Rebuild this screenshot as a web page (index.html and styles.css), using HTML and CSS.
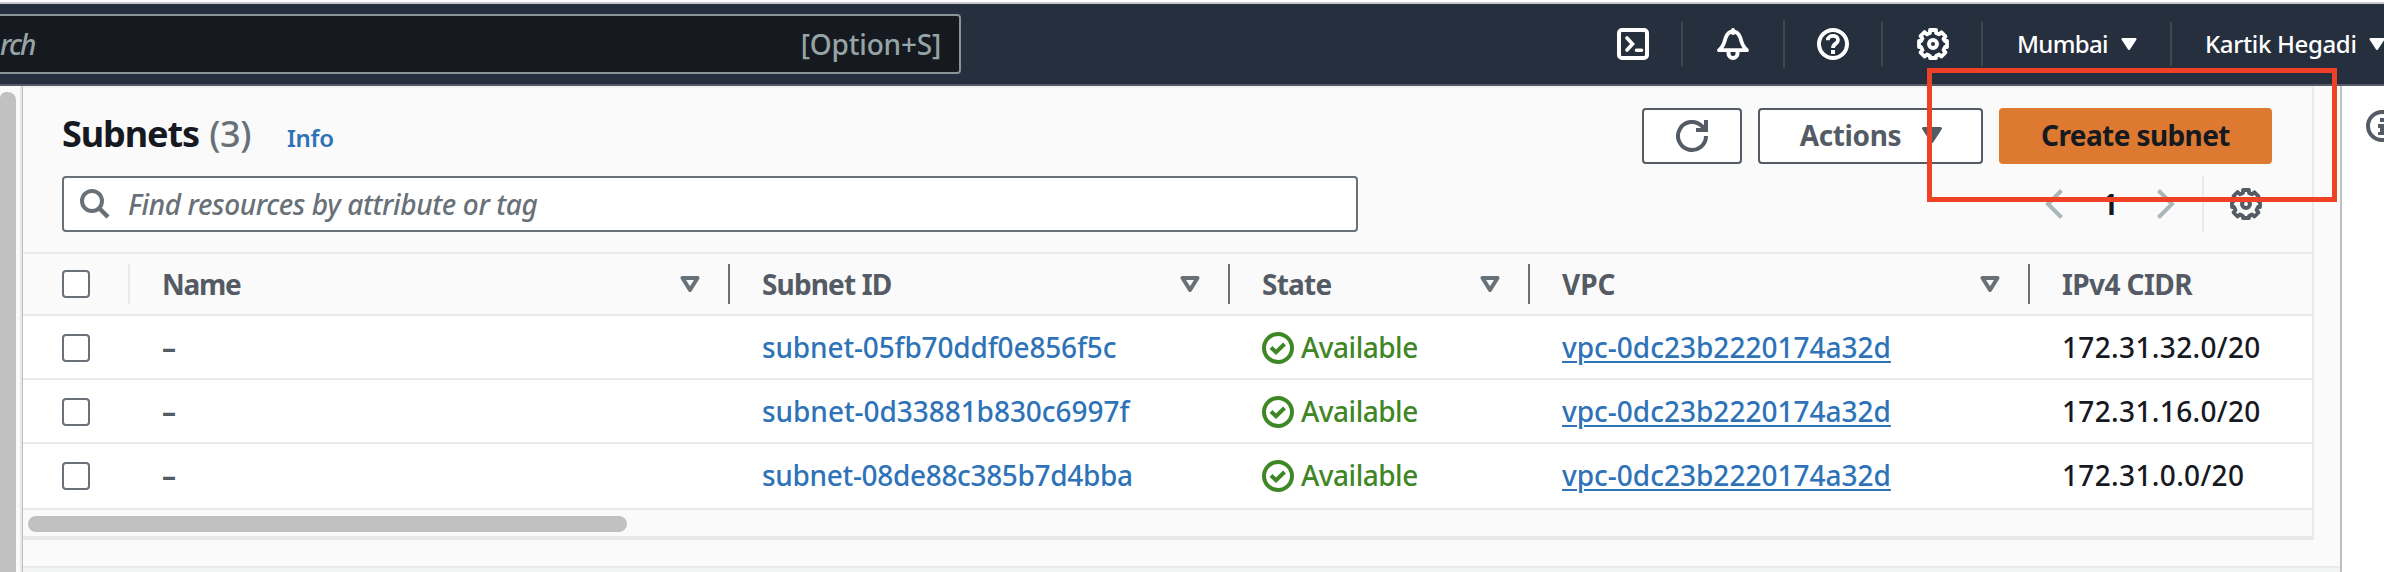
FILE: index.html
```html
<!DOCTYPE html>
<html lang="en">
<head>
<meta charset="utf-8">
<title>Subnets</title>
<link rel="stylesheet" href="styles.css">
</head>
<body>
<svg class="defs" aria-hidden="true">
  <symbol id="gear" viewBox="0 0 32 32">
    <path d="M13 2h6v3l3 1.300 2.500-2 4 4-2 2.700L28 13h2v6h-2l-1.500 3 2 2.500-4 4-2.500-2L19 28v2h-6v-2l-3-1.500-2.500 2-4-4 2-2.500L4 19H2v-6h2l1.500-2.500-2-2.500 4-4L10 6.300 13 5z" fill="none" stroke="currentColor" stroke-width="3.800" stroke-linejoin="round"/>
    <circle cx="16" cy="16" r="4" fill="none" stroke="currentColor" stroke-width="4"/>
  </symbol>
  <symbol id="check" viewBox="0 0 32 32">
    <circle cx="16" cy="16" r="14" fill="none" stroke="currentColor" stroke-width="4"/>
    <path d="M9 15.500l5 4.800 8.500-8.300" fill="none" stroke="currentColor" stroke-width="4"/>
  </symbol>
  <symbol id="sort" viewBox="0 0 20 16">
    <path d="M2.500 2h15L10 14z" fill="none" stroke="currentColor" stroke-width="4" stroke-linejoin="round"/>
  </symbol>
  <symbol id="caret" viewBox="0 0 20 16">
    <path d="M1.500 1.500h17L10 14.500z" fill="currentColor" stroke="currentColor" stroke-width="3" stroke-linejoin="round"/>
  </symbol>
</svg>

<header class="topbar">
  <div class="global-search"><em>rch</em><span>[Option+S]</span></div>
  <nav class="topnav">
    <a class="nav-icon"><svg viewBox="0 0 32 32"><rect x="2" y="2" width="28" height="28" rx="3" fill="none" stroke="currentColor" stroke-width="4"/><path d="M10 10l5.500 6-5.500 6M19.500 22.200h5" fill="none" stroke="currentColor" stroke-width="3.600" stroke-linecap="round"/></svg></a>
    <a class="nav-icon tall"><svg viewBox="0 0 32 32"><path d="M16 2v3" stroke="currentColor" stroke-width="4" stroke-linecap="round"/><path d="M2 22.200h28c-5-4-5-7-6.500-12C22 6 19.500 3.500 16 3.500S10 6 8.500 10.200C7 15.200 7 18.200 2 22.200z" fill="none" stroke="currentColor" stroke-width="3.800" stroke-linejoin="round"/><path d="M11.500 24v1.500a4.500 4.500 0 0 0 9 0V24" fill="none" stroke="currentColor" stroke-width="4"/></svg></a>
    <a class="nav-icon"><svg viewBox="0 0 32 32"><circle cx="16" cy="16" r="14" fill="none" stroke="currentColor" stroke-width="4"/><path d="M10.800 12.200c0-5.900 10.200-5.700 10.200-.2 0 4-5 3.300-5 8" fill="none" stroke="currentColor" stroke-width="3.800"/><path d="M14 22h4v4h-4z" fill="currentColor"/></svg></a>
    <a class="nav-icon"><svg><use href="#gear"/></svg></a>
    <a class="nav-menu region">Mumbai<svg><use href="#caret"/></svg></a>
    <a class="nav-menu account">Kartik Hegadi<svg><use href="#caret"/></svg></a>
  </nav>
</header>

<div class="workspace">
  <div class="side-scroll"><div class="side-thumb"></div></div>
  <main class="panel">
    <section class="card">
      <div class="title-row">
        <h1>Subnets <span>(3)</span></h1>
        <a class="info">Info</a>
        <div class="actions">
          <button class="btn refresh"><svg viewBox="0 0 32 32"><path d="M30 16A14 14 0 1 1 26 6.200l3.500 3.600" fill="none" stroke="currentColor" stroke-width="4"/><path d="M30 0v10H20" fill="none" stroke="currentColor" stroke-width="4"/></svg></button>
          <button class="btn menu">Actions<svg><use href="#caret"/></svg></button>
          <button class="btn primary">Create subnet</button>
        </div>
      </div>
      <div class="filter-row">
        <div class="filter"><svg viewBox="0 0 30 30"><circle cx="12" cy="12" r="10" fill="none" stroke="currentColor" stroke-width="4"/><path d="M19 19l9 9" stroke="currentColor" stroke-width="4.500"/></svg><em>Find resources by attribute or tag</em></div>
        <div class="pager">
          <svg class="chev" viewBox="0 0 18 30"><path d="M16.500 1.500L3 15l13.500 13.500" fill="none" stroke="currentColor" stroke-width="4"/></svg>
          <b>1</b>
          <svg class="chev" viewBox="0 0 18 30"><path d="M1.500 1.500L15 15 1.500 28.500" fill="none" stroke="currentColor" stroke-width="4"/></svg>
          <span class="gear"><svg><use href="#gear"/></svg></span>
        </div>
      </div>
      <div class="row head">
        <div class="cell pick"><i class="box"></i></div>
        <div class="cell name">Name<svg><use href="#sort"/></svg></div>
        <div class="cell sid">Subnet ID<svg><use href="#sort"/></svg></div>
        <div class="cell">State<svg><use href="#sort"/></svg></div>
        <div class="cell vpc">VPC<svg><use href="#sort"/></svg></div>
        <div class="cell cidr">IPv4 CIDR</div>
      </div>
      <div class="row">
        <div class="cell"><i class="box"></i></div><div class="cell dash">–</div>
        <div class="cell"><a class="id-a">subnet-05fb70ddf0e856f5c</a></div>
        <div class="cell state"><svg><use href="#check"/></svg>Available</div>
        <div class="cell"><a class="link">vpc-0dc23b2220174a32d</a></div>
        <div class="cell ip">172.31.32.0/20</div>
      </div>
      <div class="row">
        <div class="cell"><i class="box"></i></div><div class="cell dash">–</div>
        <div class="cell"><a class="id-b">subnet-0d33881b830c6997f</a></div>
        <div class="cell state"><svg><use href="#check"/></svg>Available</div>
        <div class="cell"><a class="link">vpc-0dc23b2220174a32d</a></div>
        <div class="cell ip">172.31.16.0/20</div>
      </div>
      <div class="row last">
        <div class="cell"><i class="box"></i></div><div class="cell dash">–</div>
        <div class="cell"><a class="id-c">subnet-08de88c385b7d4bba</a></div>
        <div class="cell state"><svg><use href="#check"/></svg>Available</div>
        <div class="cell"><a class="link">vpc-0dc23b2220174a32d</a></div>
        <div class="cell ip">172.31.0.0/20</div>
      </div>
      <div class="h-scroll"><div class="h-thumb"></div></div>
    </section>
    <div class="split"></div>
  </main>
  <aside class="help"><svg viewBox="0 0 32 32"><circle cx="16" cy="16" r="14" fill="none" stroke="currentColor" stroke-width="4"/><path d="M14 8h4v4h-4zM12 14h6v8h2v3h-8v-3h2v-4h-2z" fill="currentColor"/></svg></aside>
</div>
<div class="highlight"></div>
</body>
</html>
```

FILE: styles.css
```css
* { box-sizing: border-box; }
body {
  margin: 0;
  width: 2384px;
  height: 572px;
  overflow: hidden;
  display: flex;
  flex-direction: column;
  background: #fafafa;
  color: #16191f;
  font: 500 28px/36px "Noto Sans", sans-serif;
  white-space: nowrap;
}
svg { display: block; flex: none; }
.defs { position: absolute; width: 0; height: 0; }

.topbar {
  flex: none;
  height: 86px;
  display: flex;
  justify-content: space-between;
  align-items: center;
  background: #252f3e;
  border-top: 2px solid #fff;
  border-bottom: 2px solid #545b64;
  box-shadow: inset 0 2px #c8c8c8;
}
.global-search {
  width: 961px;
  height: 60px;
  margin-top: 2px;
  padding: 0 18px 0 0;
  display: flex;
  justify-content: space-between;
  align-items: center;
  background: #16191f;
  border: solid #879596;
  border-width: 2px 2px 2px 0;
  border-radius: 0 4px 4px 0;
  color: #95a5a6;
}
.global-search em { letter-spacing: -1.8px; }
.global-search span { letter-spacing: -0.2px; }
.topnav { display: flex; align-items: center; color: #fff; margin-top: 2px; }
.nav-icon {
  width: 100px;
  height: 44px;
  padding-left: 2px;
  display: flex;
  align-items: center;
  justify-content: center;
  border-right: 2px solid #414750;
}
.nav-icon.tall { height: 48px; width: 102px; padding: 0; }
.nav-icon:nth-child(3) { width: 98px; padding-left: 0; }
.nav-icon svg { width: 32px; height: 32px; overflow: visible; }
.nav-menu { height: 44px; display: flex; align-items: center; font-size: 24px; font-weight: 500; }
.nav-menu svg { width: 16px; height: 12px; }
.region { width: 189px; padding-left: 34px; letter-spacing: -0.7px; border-right: 2px solid #414750; gap: 13px; }
.account { width: 212px; padding-left: 33px; letter-spacing: -0.35px; gap: 12px; }

.workspace { flex: 1; display: flex; min-height: 0; }
.side-scroll { width: 22px; flex: none; padding-top: 6px; border-right: 2px solid #e8e8e8; }
.side-thumb { width: 16px; height: 500px; background: #c1c1c1; border-radius: 6px 8px 0 0; }
.panel {
  width: 2320px;
  flex: none;
  display: flex;
  flex-direction: column;
  border-left: 1px solid #bcc0c3;
  border-right: 2px solid #bcc0c3;
  background: #fafafa;
}
.card {
  width: 2291px;
  height: 454px;
  display: flex;
  flex-direction: column;
  border-top: 2px solid #f2f2f2;
  border-right: 2px solid #eaeaea;
  border-bottom: 4px solid #e8e8e8;
}
.title-row { height: 88px; display: flex; align-items: flex-start; padding: 20px 40px 0 39px; }
h1 { margin: 0; padding-top: 2px; font-size: 36px; line-height: 48px; font-weight: 700; letter-spacing: -1.1px; }
h1 span { font-weight: 500; color: #687078; letter-spacing: -0.4px; margin-left: 2px; }
.info { margin-left: 36px; padding-top: 12px; color: #2e73b8; font-size: 24px; font-weight: 650; letter-spacing: -0.3px; }
.actions { margin-left: auto; display: flex; gap: 16px; }
.btn {
  height: 56px;
  padding: 0 0 2px;
  display: flex;
  align-items: center;
  justify-content: center;
  background: #fff;
  border: 2px solid #545b64;
  border-radius: 4px;
  color: #545b64;
  font: 700 28px/36px "Noto Sans", sans-serif;
  letter-spacing: -0.4px;
}
.refresh { width: 100px; padding: 0; }
.refresh svg { width: 32px; height: 32px; overflow: visible; }
.menu { width: 225px; gap: 21px; padding-left: 1px; }
.menu svg { width: 20px; height: 16px; }
.primary { width: 273px; background: #dd7931; border-color: #dd7931; color: #16191f; letter-spacing: -0.6px; }

.filter-row { height: 78px; padding: 0 40px 0 39px; display: flex; align-items: flex-start; justify-content: space-between; border-bottom: 2px solid #eaeaea; }
.filter {
  width: 1296px;
  height: 56px;
  padding-left: 16px;
  display: flex;
  align-items: center;
  gap: 18px;
  background: #fff;
  border: 2px solid #687078;
  border-radius: 4px;
  color: #687078;
}
.filter em { letter-spacing: -0.37px; }
.filter svg { width: 30px; height: 30px; }
.pager { height: 56px; display: flex; align-items: center; }
.pager b { width: 94px; text-align: center; font-weight: 700; }
.chev { width: 18px; height: 30px; color: #aab7b8; }
.gear { height: 56px; margin-left: 27px; padding: 0 10px 0 26px; display: flex; align-items: center; border-left: 2px solid #eaeaea; color: #545b64; }
.gear svg { width: 32px; height: 32px; overflow: visible; }

.row {
  display: grid;
  grid-template-columns: 107px 600px 500px 300px 500px 282px;
  height: 64px;
  background: #fff;
  border-bottom: 2px solid #eaeaea;
}
.row.last { height: 66px; }
.row.last .cell { height: 62px; }
.cell { display: flex; align-items: center; padding-left: 32px; }
.cell:first-child { padding-left: 39px; }
.box { width: 28px; height: 28px; margin-top: 2px; border: 2px solid #687078; border-radius: 4px; background: #fff; }
.head { height: 62px; padding: 10px 0; background: #fafafa; color: #545b64; font-weight: 700; letter-spacing: -0.75px; }
.head .box { margin-top: 0; }
.head .cell { height: 40px; justify-content: space-between; padding-right: 28px; border-right: 2px solid #687078; line-height: 38px; }
.head .cell:last-child { border: 0; }
.head .pick { border-color: #eaeaea; }
.head .name { letter-spacing: -1.3px; }
.head .sid { letter-spacing: -0.85px; }
.head .vpc { letter-spacing: 0; }
.head .cidr { letter-spacing: -0.6px; }
.head svg { width: 20px; height: 16px; color: #687078; }
.dash { color: #545b64; font-weight: 700; }
.id-a, .id-b, .id-c { color: #2e73b8; }
.id-a { letter-spacing: -0.15px; }
.id-b { letter-spacing: -0.05px; }
.id-c { letter-spacing: -0.33px; }
.state { color: #3f8624; gap: 7px; letter-spacing: -0.5px; }
.state svg { width: 32px; height: 32px; margin-top: 2px; overflow: visible; }
.link { color: #2e73b8; text-decoration: underline; text-decoration-thickness: 2px; text-underline-offset: 3px; }
.ip { letter-spacing: 0.35px; }
.h-scroll { flex: 1; padding: 6px 0 0 5px; }
.h-thumb { width: 599px; height: 16px; border-radius: 8px; background: #c1c1c1; }
.split { margin-top: 26px; height: 6px; background: #f2f3f3; border-top: 2px solid #eaeaea; }
.help { flex: 1; min-width: 0; overflow: hidden; background: #fff; padding: 24px 0 0 24px; color: #545b64; }
.help svg { width: 32px; height: 32px; }
.highlight { position: absolute; left: 1927px; top: 68px; width: 410px; height: 134px; border: 5px solid #ee4125; }
```
